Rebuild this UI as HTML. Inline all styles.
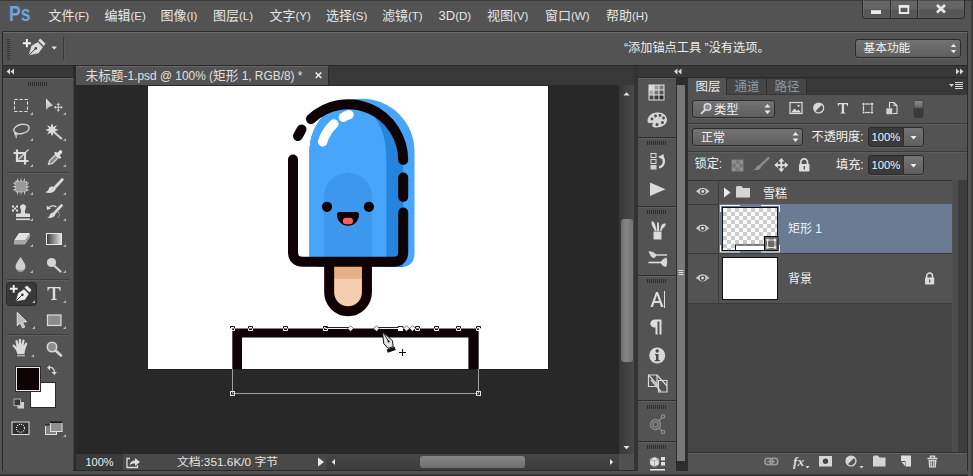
<!DOCTYPE html>
<html lang="zh-CN">
<head>
<meta charset="utf-8">
<title>Photoshop</title>
<style>
*{margin:0;padding:0;box-sizing:border-box}
html,body{width:973px;height:476px;overflow:hidden;background:#535353}
body{position:relative;font-family:"Liberation Sans","Noto Sans CJK SC",sans-serif;color:#e8e8e8;font-size:12px}
.a{position:absolute}
.t{position:absolute;white-space:nowrap;line-height:1}
svg{position:absolute;overflow:visible}
.m{font-size:13px;color:#e6e6e6}.m .l{font-size:11.5px;position:relative;top:-0.5px}
.dd{border:1px solid #2b2b2b;border-radius:3px;background:linear-gradient(#737373,#5e5e5e);box-shadow:0 1px 0 #626262}
.fld{border:1px solid #2b2b2b;border-radius:3px;background:#3a3a3a;box-shadow:0 1px 0 #626262;overflow:hidden}
.fld i{position:absolute;right:0;top:0;width:20px;height:18px;background:linear-gradient(#757575,#5f5f5f);border-left:1px solid #2f2f2f}
.tl{font-size:11.900px}
</style>
</head>
<body>
<!-- ===== FRAME ===== -->
<div class="a" style="left:0;top:0;width:973px;height:1px;background:#3a3a3a"></div>
<div class="a" style="left:0;top:31px;width:973px;height:445px;background:#3e3e3e"></div>
<div class="a" style="left:2px;top:31px;width:966px;height:1px;background:#2a2a2a"></div>
<!-- options bar -->
<div class="a" id="opt" style="left:2px;top:32px;width:966px;height:33px;background:#535353;border-top:1px solid #6a6a6a;border-left:1px solid #2a2a2a;border-right:1px solid #2a2a2a"></div>
<div class="a" style="left:2px;top:65px;width:966px;height:1px;background:#2a2a2a"></div>

<!-- ===== OPTIONS BAR CONTENT ===== -->
<svg id="opticons" style="left:0;top:0;z-index:3" width="973" height="66" viewBox="0 0 973 66">
<defs><linearGradient id="wb" x1="0" x2="0" y1="0" y2="1"><stop offset="0" stop-color="#686868"/><stop offset="0.5" stop-color="#626262"/><stop offset="0.52" stop-color="#565656"/><stop offset="1" stop-color="#585858"/></linearGradient></defs>
<g fill="#333">
<rect x="7" y="39" width="3" height="1"/><rect x="7" y="41" width="3" height="1"/><rect x="7" y="43" width="3" height="1"/><rect x="7" y="45" width="3" height="1"/><rect x="7" y="47" width="3" height="1"/><rect x="7" y="49" width="3" height="1"/><rect x="7" y="51" width="3" height="1"/><rect x="7" y="53" width="3" height="1"/><rect x="7" y="55" width="3" height="1"/><rect x="7" y="57" width="3" height="1"/><rect x="7" y="59" width="3" height="1"/>
</g>
<!-- pen+ -->
<path d="M22.800,43.200 H31 M26.900,39 V47.300" stroke="#f0f0f0" stroke-width="2"/>
<path d="M28.200,55.700 L31.300,45.500 L38,41.800 L43.200,47.300 L38.600,53.500 Z" fill="#dcdcdc" stroke="#404040" stroke-width="0.500"/>
<path d="M28.400,55.700 L35.300,48.800" stroke="#404040" stroke-width="1"/>
<circle cx="35.800" cy="48.400" r="1.300" fill="#404040"/>
<path d="M38.300,40.600 L40.300,38.500 L45.600,43.700 L43.700,46 Z" fill="#dcdcdc"/>
<path d="M51.500,46.500 h5.500 l-2.750,3.200 Z" fill="#e0e0e0"/>
<path d="M63.500,37 V60" stroke="#3a3a3a"/><path d="M64.500,37 V60" stroke="#5a5a5a"/>
<!-- workspace dropdown arrows -->
<path d="M950.800,47 l2.700,-3.300 l2.700,3.300 Z M950.800,50 l2.700,3.300 l2.700,-3.300 Z" fill="#e8e8e8"/>
<!-- window controls -->
<path d="M862.500,0 V15.500 Q862.500,18.500 865.500,18.500 H961.500 Q964.500,18.500 964.500,15.500 V0 Z" fill="url(#wb)" stroke="#2c2c2c"/>
<path d="M890.500,0 V18 M917.500,0 V18" stroke="#2c2c2c"/>
<path d="M891.500,0 V18 M918.500,0 V18 M863.500,0 V16" stroke="#6e6e6e" stroke-width="0.700"/>
<rect x="871" y="10.200" width="10" height="3.800" fill="#eaeaea"/>
<path d="M899.700,6.500 H908.300 V13 H899.700 Z" fill="none" stroke="#eaeaea" stroke-width="1.800"/>
<rect x="898.800" y="5" width="10.400" height="2.600" fill="#eaeaea"/>
<path d="M937,5 L945,12.500 M945,5 L937,12.500" stroke="#eaeaea" stroke-width="2.700"/>
</svg>
<div class="t" style="left:624px;top:42px;font-size:12.200px;color:#ececec">“添加锚点工具 ”没有选项。</div>
<div class="a dd" style="left:855px;top:39px;width:106px;height:19px"></div>
<div class="t" style="left:863.500px;top:42px;font-size:11.700px;color:#f2f2f2">基本功能</div>
<!-- ===== MENU ===== -->
<div class="t" style="left:9px;top:3px;font-size:22px;font-weight:bold;color:#6ca3dc;transform:scaleX(0.8);transform-origin:0 0">Ps</div>
<div id="menu">
<div class="t m" style="left:48.5px;top:9px"><span class="c">文件</span><span class="l">(F)</span></div>
<div class="t m" style="left:104.5px;top:9px"><span class="c">编辑</span><span class="l">(E)</span></div>
<div class="t m" style="left:160.5px;top:9px"><span class="c">图像</span><span class="l">(I)</span></div>
<div class="t m" style="left:213px;top:9px"><span class="c">图层</span><span class="l">(L)</span></div>
<div class="t m" style="left:269.5px;top:9px"><span class="c">文字</span><span class="l">(Y)</span></div>
<div class="t m" style="left:326px;top:9px"><span class="c">选择</span><span class="l">(S)</span></div>
<div class="t m" style="left:382px;top:9px"><span class="c">滤镜</span><span class="l">(T)</span></div>
<div class="t m" style="left:438.5px;top:9px"><span class="c">3D</span><span class="l">(D)</span></div>
<div class="t m" style="left:487px;top:9px"><span class="c">视图</span><span class="l">(V)</span></div>
<div class="t m" style="left:545px;top:9px"><span class="c">窗口</span><span class="l">(W)</span></div>
<div class="t m" style="left:606px;top:9px"><span class="c">帮助</span><span class="l">(H)</span></div>
</div>

<!-- ===== CANVAS AREA ===== -->
<div class="a" id="doc" style="left:76px;top:66px;width:558px;height:406px;background:#282828"></div>

<!-- ===== CANVAS ===== -->
<div class="a" style="left:148px;top:86px;width:400px;height:283px;background:#fff;box-shadow:1px 1px 0 #1c1c1c"></div>
<svg id="art" style="left:0;top:0" width="973" height="476" viewBox="0 0 973 476">
<defs>
<clipPath id="bodyclip"><path d="M309.5,151.3 A52.5,52.5 0 0 1 414.5,151.3 L414.5,253 Q414.5,267 400.5,267 L321.5,267 Q309.5,267 309.5,255 Z"/></clipPath>
<clipPath id="cv"><rect x="148" y="86" width="400" height="283"/></clipPath>
</defs>
<!-- body -->
<g clip-path="url(#bodyclip)">
<rect x="300" y="90" width="130" height="180" fill="#47a6fb"/>
<path d="M293,270 L293,160 A55,56 0 0 1 403.2,160 L403.2,270 Z" fill="#2585dc"/>
<path d="M386.300,270 L386.300,160 C386.300,140 382,125 372,114 L350,92 L280,92 L280,270 Z" fill="#47a6fb"/>
<path d="M324,270 L324,196.7 A24,24 0 0 1 372,196.7 L372,270 Z" fill="#3d97ec"/>
</g>
<!-- stick -->
<path d="M329.15,262 L329.15,292.3 A18.9,18.9 0 0 0 366.95,292.3 L366.95,262 Z" fill="#f5cdb0"/>
<rect x="329.5" y="262" width="37.5" height="16.7" fill="#eab085"/>
<path d="M329.15,262 L329.15,292.3 A18.9,18.9 0 0 0 366.95,292.3 L366.95,262" fill="none" stroke="#0e0205" stroke-width="10"/>
<!-- highlights -->
<path d="M322.600,141.700 A42,42 0 0 1 333.900,123.900" fill="none" stroke="#fff" stroke-width="9.500" stroke-linecap="round"/>
<path d="M343.300,117.300 A41,41 0 0 1 349,114.700" fill="none" stroke="#fff" stroke-width="9.400" stroke-linecap="round"/>
<!-- outline -->
<g fill="none" stroke="#0e0205" stroke-width="10" stroke-linecap="round">
<path d="M293,159.500 L293,251.700 Q293,261.700 303,261.700 L393.2,261.7 Q403.2,261.7 403.2,251.7 L403.2,212.5"/>
<path d="M403.2,197 L403.2,177.5"/>
<path d="M403.2,160 A55,56 0 0 0 311,119"/>
<path d="M301.5,129.5 L298,136"/>
</g>
<!-- face -->
<circle cx="327" cy="206.8" r="5.1" fill="#0e0205"/>
<circle cx="368.9" cy="206.8" r="5.1" fill="#0e0205"/>
<path d="M337,214.5 Q337,212 339.5,212 L356.5,212 Q359,212 359,214.5 A11,11.3 0 0 1 337,214.5 Z" fill="#0e0205"/>
<rect x="342.8" y="217.8" width="10.2" height="6.4" rx="3.2" fill="#f25f65"/>
<!-- rect shape -->
<g clip-path="url(#cv)">
<path d="M232.6,328.5 L478.6,328.5 L478.6,375 L468.4,375 L468.4,337.4 L242,337.4 L242,375 L232.6,375 Z" fill="#0e0205"/>
</g>
<!-- path outline / bbox -->
<path d="M232.5,369 L232.5,393.5 L478.5,393.5 L478.5,369" fill="none" stroke="#a0a0a0" stroke-width="1"/>
<path d="M232.5,328.5 L232.5,369 M478.5,328.5 L478.5,369" fill="none" stroke="#555" stroke-width="1"/>
<path d="M325.500,327.500 L350.500,327.500 M376.500,327.500 L400.500,327.500" stroke="#222" stroke-width="1"/>
<path d="M325.500,328.500 L350.500,328.500 M376.500,328.500 L400.500,328.500" stroke="#f0f0f0" stroke-width="1"/>
<g>
<path d="M230.5,328.5 V326.5 H234.5 V328.5" fill="none" stroke="#111" stroke-width="1"/><path d="M230.5,328.5 V330.5 H234.5 V328.5" fill="none" stroke="#fff" stroke-width="1"/>
<path d="M248.5,328.5 V326.5 H252.5 V328.5" fill="none" stroke="#111" stroke-width="1"/><path d="M248.5,328.5 V330.5 H252.5 V328.5" fill="none" stroke="#fff" stroke-width="1"/>
<path d="M283.5,328.5 V326.5 H287.5 V328.5" fill="none" stroke="#111" stroke-width="1"/><path d="M283.5,328.5 V330.5 H287.5 V328.5" fill="none" stroke="#fff" stroke-width="1"/>
<path d="M323.5,328.5 V326.5 H327.5 V328.5" fill="none" stroke="#111" stroke-width="1"/><path d="M323.5,328.5 V330.5 H327.5 V328.5" fill="none" stroke="#fff" stroke-width="1"/>
<path d="M415.5,328.5 V326.5 H419.5 V328.5" fill="none" stroke="#111" stroke-width="1"/><path d="M415.5,328.5 V330.5 H419.5 V328.5" fill="none" stroke="#fff" stroke-width="1"/>
<path d="M434.5,328.5 V326.5 H438.5 V328.5" fill="none" stroke="#111" stroke-width="1"/><path d="M434.5,328.5 V330.5 H438.5 V328.5" fill="none" stroke="#fff" stroke-width="1"/>
<path d="M456.5,328.5 V326.5 H460.5 V328.5" fill="none" stroke="#111" stroke-width="1"/><path d="M456.5,328.5 V330.5 H460.5 V328.5" fill="none" stroke="#fff" stroke-width="1"/>
<path d="M476.5,328.5 V326.5 H480.5 V328.5" fill="none" stroke="#111" stroke-width="1"/><path d="M476.5,328.5 V330.5 H480.5 V328.5" fill="none" stroke="#fff" stroke-width="1"/>
<rect x="230.500" y="391.500" width="4" height="4" fill="none" stroke="#e0e0e0" stroke-width="1"/><rect x="476.500" y="391.500" width="4" height="4" fill="none" stroke="#e0e0e0" stroke-width="1"/>
<path d="M350.5,325.7 l2.8,2.8 l-2.8,2.8 l-2.8,-2.8 Z" fill="#fff" stroke="#222" stroke-width="0.6"/>
<path d="M376.5,325.7 l2.8,2.8 l-2.8,2.8 l-2.8,-2.8 Z" fill="#fff" stroke="#222" stroke-width="0.6"/>
<path d="M406.5,325.7 l2.8,2.8 l-2.8,2.8 l-2.8,-2.8 Z" fill="#fff" stroke="#222" stroke-width="0.6"/>
<path d="M412.5,325.7 l2.8,2.8 l-2.8,2.8 l-2.8,-2.8 Z" fill="#fff" stroke="#222" stroke-width="0.6"/>
<rect x="398" y="326" width="5" height="5" fill="#fff"/><path d="M398,328 V326.500 H403 V328" fill="none" stroke="#222" stroke-width="1"/>
</g>
<!-- pen cursor -->
<path d="M382.3,331.3 L392.4,340.6 L393.2,346.6 L388,348.4 L383.8,343.6 Z" fill="#e4e4e4" stroke="#111" stroke-width="1"/>
<path d="M383,332.3 L388.3,340.8" stroke="#111" stroke-width="0.9" fill="none"/>
<circle cx="388.6" cy="341.4" r="1.1" fill="#111"/>
<path d="M386.700,349.400 L394.600,346.700 L395.700,350 L387.800,352.800 Z" fill="#111"/>
<path d="M399,352.500 L406,352.500 M402.500,349 L402.500,356" stroke="#111" stroke-width="1"/>
</svg>
<!-- ===== TOOLS PANEL ===== -->
<div class="a" style="left:0;top:31px;width:3px;height:445px;background:#535353"></div>
<div class="a" style="left:2px;top:31px;width:1px;height:440px;background:#2a2a2a"></div>
<div class="a" style="left:3px;top:66px;width:70px;height:11px;background:#383838"></div>
<div class="a" style="left:3px;top:77px;width:70px;height:1px;background:#2a2a2a"></div>
<div class="a" id="tools" style="left:3px;top:78px;width:70px;height:396px;background:#535353;border-top:1px solid #626262"></div>
<div class="a" style="left:73px;top:66px;width:3px;height:405px;background:#2a2a2a"></div><div class="a" style="left:73px;top:78px;width:1px;height:396px;background:#414141"></div>
<!-- tab bar -->
<div class="a" style="left:76px;top:66px;width:558px;height:19px;background:#383838"></div>
<div class="a" style="left:76px;top:66px;width:253px;height:19px;background:#535353;border-top:1px solid #656565;border-right:1px solid #2a2a2a"></div>
<div class="t" id="tabtxt" style="left:85.500px;top:70px;font-size:12.700px;color:#e0e0e0">未标题<span class="tl">-1.psd @ 100% (</span>矩形<span class="tl"> 1, RGB/8) *</span></div>
<svg style="left:314.500px;top:72px" width="7" height="7" viewBox="0 0 7 7"><path d="M0.700,0.500 L6.300,6 M6.300,0.500 L0.700,6" stroke="#e8e8e8" stroke-width="1.700"/></svg>
<!-- status bar -->
<div class="a" style="left:76px;top:454px;width:558px;height:17px;background:#484848"></div>
<div class="a" style="left:76px;top:454px;width:47px;height:17px;background:#3a3a3a"></div>
<div class="t" style="left:85.500px;top:457px;font-size:11px;color:#eee">100%</div>
<div class="t" style="left:177px;top:456.500px;font-size:11.800px;color:#e6e6e6">文档:351.6K/0 字节</div>
<div class="a" style="left:326px;top:454px;width:293px;height:17px;background:linear-gradient(#464646,#3c3c3c)"></div>
<div class="a" style="left:420px;top:456px;width:105px;height:12px;border-radius:3px;background:linear-gradient(#858585,#707070)"></div>
<!-- v scrollbar -->
<div class="a" style="left:619px;top:85px;width:16px;height:369px;background:linear-gradient(90deg,#363636,#404040 40%,#4a4a4a)"></div><div class="a" style="left:619px;top:454px;width:16px;height:17px;background:#505050"></div>
<div class="a" style="left:621px;top:219px;width:12px;height:143px;border-radius:3px;background:linear-gradient(90deg,#6c6c6c,#868686 40%,#747474)"></div>
<div class="a" style="left:0;top:471px;width:973px;height:3px;background:#515151"></div><div class="a" style="left:0;top:474px;width:973px;height:2px;background:linear-gradient(#3c3c3c,#2c2c2c)"></div>
<div class="a" style="left:73px;top:470px;width:895px;height:1px;background:#2a2a2a"></div>

<!-- ===== TOOL ICONS ===== -->
<svg id="ticons" style="left:0;top:0" width="76" height="476" viewBox="0 0 76 476">
<defs>
<linearGradient id="gg" x1="0" x2="1" y1="0" y2="0"><stop offset="0" stop-color="#3a3a3a"/><stop offset="1" stop-color="#e4e4e4"/></linearGradient>
<linearGradient id="ig" x1="0" x2="0" y1="0" y2="1"><stop offset="0" stop-color="#ececec"/><stop offset="1" stop-color="#b4b4b4"/></linearGradient>
</defs>
<path d="M6.500,71.500 l3.500,-3 l0,6 Z M10.500,71.500 l3.500,-3 l0,6 Z" fill="#d8d8d8"/>
<rect x="28" y="82" width="1" height="4" fill="#2e2e2e"/><rect x="30" y="82" width="1" height="4" fill="#2e2e2e"/><rect x="32" y="82" width="1" height="4" fill="#2e2e2e"/><rect x="34" y="82" width="1" height="4" fill="#2e2e2e"/><rect x="36" y="82" width="1" height="4" fill="#2e2e2e"/><rect x="38" y="82" width="1" height="4" fill="#2e2e2e"/><rect x="40" y="82" width="1" height="4" fill="#2e2e2e"/><rect x="42" y="82" width="1" height="4" fill="#2e2e2e"/><rect x="44" y="82" width="1" height="4" fill="#2e2e2e"/><rect x="46" y="82" width="1" height="4" fill="#2e2e2e"/>
<!-- dividers -->
<g stroke="#3d3d3d" stroke-width="1"><path d="M7,172.500 H69 M7,279.500 H69 M7,334.500 H69"/></g>
<g stroke="#5e5e5e" stroke-width="1"><path d="M7,173.500 H69 M7,280.500 H69 M7,335.500 H69"/></g>
<!-- selected cell -->
<rect x="6.500" y="282.500" width="30" height="23" rx="3" fill="#383838" stroke="#2c2c2c"/>
<!-- marquee -->
<rect x="14.500" y="99.500" width="13" height="12" fill="none" stroke="#dedede" stroke-width="1.1" stroke-dasharray="3.2,1.8"/>
<!-- move -->
<path d="M46,98.500 L46,110 L49,107 L53,105.500 Z" fill="url(#ig)"/>
<path d="M58.300,102.800 l1.700,2.100 h-1.200 v1.900 h1.900 v-1.200 l2.100,1.700 l-2.100,1.700 v-1.200 h-1.900 v1.900 h1.200 l-1.700,2.100 l-1.700,-2.100 h1.200 v-1.900 h-1.900 v1.200 l-2.100,-1.700 l2.100,-1.700 v1.200 h1.900 v-1.900 h-1.200 Z" fill="#d0d0d0"/>
<!-- lasso -->
<ellipse cx="21.500" cy="129" rx="7.800" ry="4.600" transform="rotate(-12 21.500 129)" fill="none" stroke="#d0d0d0" stroke-width="1.400"/>
<path d="M15.500,132 c-1.500,1.500 -1,3 0.800,3 c1.500,0 1.500,-2 0,-2 c-1,0 -0.500,3 0.200,5" fill="none" stroke="#d0d0d0" stroke-width="1.100"/>
<!-- wand -->
<path d="M52,123.200 l1.400,3.800 l3.500,-2 l-2,3.500 l3.800,1.400 l-3.800,1.400 l2,3.500 l-3.500,-2 l-1.400,3.800 l-1.400,-3.800 l-3.500,2 l2,-3.500 l-3.800,-1.400 l3.800,-1.400 l-2,-3.500 l3.500,2 Z" fill="#dcdcdc"/>
<path d="M54.500,132.500 L61.300,138.500" stroke="#d0d0d0" stroke-width="2.200" stroke-linecap="round"/>
<!-- crop -->
<path d="M17,149.500 V161 H28.500 M13.500,153 H25 V164.500" fill="none" stroke="#dcdcdc" stroke-width="2.200"/>
<rect x="18.500" y="154.500" width="5" height="5" fill="#6a6a6a"/>
<path d="M18.500,159.500 L28.500,149.500" stroke="#dcdcdc" stroke-width="1.100"/>
<!-- eyedropper -->
<path d="M48.500,164.500 L49.500,160.500 L55.500,154.500 L58.500,157.500 L52.500,163.500 Z" fill="#8e8e8e" stroke="#dadada" stroke-width="1.200"/>
<path d="M55.500,153 L60,157.500" stroke="#e0e0e0" stroke-width="2.400" stroke-linecap="round"/>
<path d="M57.500,155 L60.500,152" stroke="#e0e0e0" stroke-width="3.600" stroke-linecap="round"/>
<!-- healing -->
<rect x="15" y="181" width="12" height="11" rx="2.500" fill="#9a9a9a" stroke="#e0e0e0" stroke-width="1.200" stroke-dasharray="1.500,1.300"/>
<path d="M17.500,178.500 V194.500 M21,178.500 V194.500 M24.500,178.500 V194.500 M13,183 H29 M13,186.500 H29 M13,190 H29" stroke="#e0e0e0" stroke-width="0.700" stroke-dasharray="2.500,11,2.500" />
<!-- brush -->
<path d="M62.300,179.500 L54,188.500" stroke="#d8d8d8" stroke-width="2.800" stroke-linecap="round"/>
<path d="M53.500,187 c-2.500,-1.200 -4.500,0.500 -5,2.500 c-0.500,1.500 -1.800,2.300 -3.500,2.500 c3.500,2 9.500,1 10.800,-3 Z" fill="#d8d8d8"/>
<!-- stamp -->
<path d="M12,205.500 h2 v2 h-2 Z M16,205.500 h2 v2 h-2 Z M14,207.500 h2 v2 h-2 Z M12,209.500 h2 v2 h-2 Z M16,209.500 h2 v2 h-2 Z" fill="#e6e6e6"/>
<path d="M20.500,209 a3,3 0 1 1 5,0 c-0.800,1.500 -0.800,3 0,4.500 h3.500 q1,0 1,1 v2.500 h-14 v-2.500 q0,-1 1,-1 h3.500 c0.800,-1.500 0.800,-3 0,-4.500 Z" fill="#dcdcdc"/>
<rect x="16" y="218.500" width="14" height="1.600" fill="#dcdcdc"/>
<!-- history brush -->
<path d="M61.500,205.500 L53.500,214" stroke="#d8d8d8" stroke-width="2.600" stroke-linecap="round"/>
<path d="M54,213 c-2,-1 -3.800,0.300 -4.300,2.200 c-0.400,1.300 -1.300,1.800 -2.700,2 c2.800,1.500 7.500,0.600 8.500,-2.700 Z" fill="#d8d8d8"/>
<path d="M48,208.500 c2,-3 6,-3.500 8.500,-1.500" fill="none" stroke="#d8d8d8" stroke-width="1.300"/>
<path d="M46.500,205.500 l0.500,4.500 l4,-1.500 Z" fill="#d8d8d8"/>
<path d="M58.500,212 c1.500,2 1,4.500 -1,6" fill="none" stroke="#d8d8d8" stroke-width="1" stroke-dasharray="1.200,1.200"/>
<!-- eraser -->
<path d="M14,240.500 L19,233 L30,233 L25,240.500 Z" fill="#e2e2e2"/>
<path d="M14,240.500 L25,240.500 L30,233 L30,237 L25,244.500 L14,244.500 Z" fill="#a8a8a8"/>
<!-- gradient -->
<rect x="46.500" y="233.500" width="15" height="11" fill="url(#gg)" stroke="#e8e8e8" stroke-width="1"/>
<!-- blur -->
<path d="M20.500,257 c2,3.500 5,6.500 5,9.500 a5,5 0 0 1 -10,0 c0,-3 3,-6 5,-9.500 Z" fill="#cfcfcf"/>
<path d="M15.800,267.500 a4.700,2.500 0 0 0 9.400,0 a4.700,4.700 0 0 1 -9.400,0 Z" fill="#9c9c9c"/>
<!-- dodge -->
<circle cx="51.500" cy="262.500" r="4.600" fill="#d4d4d4"/>
<path d="M54.500,266 L60.500,271.500" stroke="#d4d4d4" stroke-width="2.200" stroke-linecap="round"/>
<!-- pen+ -->
<path d="M9.800,288.800 H17.600 M13.700,284.900 V292.700" stroke="#f0f0f0" stroke-width="1.900"/>
<path d="M15.500,301.500 L18,293 L24,289 L29,294 L25,300 Z" fill="#ececec" stroke="#303030" stroke-width="0.500"/>
<path d="M15.500,301.500 L22,295" stroke="#303030" stroke-width="1"/>
<circle cx="22.500" cy="294.700" r="1.200" fill="#303030"/>
<path d="M24.500,287.500 L27,285.500 L31.500,290 L29.500,292.500 Z" fill="#ececec"/>
<!-- T -->
<path d="M47.500,287 H60.500 V291 H59.700 C59.500,289 59,288.300 57.500,288.300 H55.200 V297.800 C55.200,298.900 55.700,299.200 57,299.300 V300 H51 V299.300 C52.300,299.200 52.800,298.900 52.800,297.800 V288.300 H50.500 C49,288.300 48.500,289 48.300,291 H47.500 Z" fill="#dedede"/>
<!-- path select arrow -->
<path d="M17.200,312.300 L17.200,325.800 L20.300,323 L22.500,328 L24.800,327 L22.600,322.200 L26.800,321.800 Z" fill="#bdbdbd" stroke="#ececec" stroke-width="0.800"/>
<!-- rectangle shape -->
<rect x="47.500" y="315" width="13.500" height="10.500" fill="#8c8c8c" stroke="#dcdcdc" stroke-width="1.200"/>
<!-- hand -->
<path d="M16,350 c-1,-1.500 -2.800,-3 -3.300,-4 c-0.500,-1.200 0.800,-2 1.800,-1 l2,2 l-1,-5.500 c-0.300,-1.500 1.700,-2 2.100,-0.500 l1,4 l0.200,-5.200 c0,-1.500 2.200,-1.500 2.200,0 l0.200,5 l1.200,-4.300 c0.400,-1.500 2.400,-1 2.100,0.500 l-0.900,4.800 l1.600,-2.600 c0.800,-1.300 2.500,-0.400 1.900,1 c-1,2.300 -1.700,4.500 -2.200,6.800 l-0.500,3 h-7 Z" fill="#dadada"/>
<rect x="17" y="354.800" width="8" height="1.600" fill="#b0b0b0"/>
<!-- zoom -->
<circle cx="52" cy="347" r="4.700" fill="#8e8e8e" stroke="#d6d6d6" stroke-width="1.600"/>
<path d="M55.800,350.800 L61,355.500" stroke="#d6d6d6" stroke-width="2.600" stroke-linecap="round"/>
<!-- colour swatches -->
<rect x="30.500" y="382.500" width="25" height="25" fill="#fff" stroke="#2a2a2a"/>
<rect x="15.500" y="366.500" width="25" height="25" fill="#0e0205" stroke="#2a2a2a"/>
<rect x="16.500" y="367.500" width="23" height="23" fill="none" stroke="#e8e8e8"/>
<path d="M49,367.500 c3.500,-0.500 5.500,1.500 5.300,5" fill="none" stroke="#d8d8d8" stroke-width="1.300"/>
<path d="M47,367.800 l3,-2.800 v5.200 Z M54.300,375 l-2.700,-3 h5.300 Z" fill="#d8d8d8"/>
<rect x="17.500" y="402" width="6.500" height="6.500" fill="#d0d0d0"/>
<rect x="14" y="399" width="6.500" height="6.500" fill="#3a3a3a" stroke="#c8c8c8" stroke-width="0.800"/>
<!-- quick mask -->
<rect x="12" y="422" width="17" height="12.500" fill="#2f2f2f" stroke="#e0e0e0" stroke-width="1"/>
<circle cx="20.500" cy="428.300" r="4" fill="none" stroke="#f0f0f0" stroke-width="1.100" stroke-dasharray="1,1.100"/>
<!-- screen mode -->
<rect x="45.500" y="425.500" width="11" height="9" fill="#808080" stroke="#e0e0e0"/>
<rect x="50.500" y="422.500" width="11.500" height="9" fill="#8e8e8e" stroke="#e0e0e0"/>
<rect x="50" y="421.500" width="12.500" height="1.500" fill="#151515"/>
<rect x="45" y="424.500" width="5" height="1.200" fill="#151515"/>
<path d="M33,115 l0,-3 l-3,3 Z" fill="#b4b4b4"/><path d="M66,115 l0,-3 l-3,3 Z" fill="#b4b4b4"/><path d="M33,141 l0,-3 l-3,3 Z" fill="#b4b4b4"/><path d="M66,141 l0,-3 l-3,3 Z" fill="#b4b4b4"/><path d="M33,167 l0,-3 l-3,3 Z" fill="#b4b4b4"/><path d="M66,167 l0,-3 l-3,3 Z" fill="#b4b4b4"/><path d="M33,195 l0,-3 l-3,3 Z" fill="#b4b4b4"/><path d="M66,195 l0,-3 l-3,3 Z" fill="#b4b4b4"/><path d="M33,221 l0,-3 l-3,3 Z" fill="#b4b4b4"/><path d="M66,221 l0,-3 l-3,3 Z" fill="#b4b4b4"/><path d="M33,247 l0,-3 l-3,3 Z" fill="#b4b4b4"/><path d="M66,247 l0,-3 l-3,3 Z" fill="#b4b4b4"/><path d="M33,273 l0,-3 l-3,3 Z" fill="#b4b4b4"/><path d="M66,273 l0,-3 l-3,3 Z" fill="#b4b4b4"/><path d="M35,303 l0,-3 l-3,3 Z" fill="#b4b4b4"/><path d="M66,303 l0,-3 l-3,3 Z" fill="#b4b4b4"/><path d="M35,329 l0,-3 l-3,3 Z" fill="#b4b4b4"/><path d="M66,329 l0,-3 l-3,3 Z" fill="#b4b4b4"/><path d="M34,357 l0,-3 l-3,3 Z" fill="#b4b4b4"/><path d="M66,437 l0,-3 l-3,3 Z" fill="#b4b4b4"/>
</svg>
<!-- ===== RIGHT SIDE ===== -->
<div class="a" style="left:634px;top:66px;width:4px;height:405px;background:#333"></div>
<div class="a" style="left:638px;top:66px;width:329px;height:11px;background:#383838"></div>
<div class="a" style="left:638px;top:77px;width:329px;height:1px;background:#2a2a2a"></div>
<div class="a" id="dock" style="left:638px;top:78px;width:38px;height:393px;background:#535353"></div>
<div class="a" style="left:676px;top:78px;width:12px;height:393px;background:#2d2d2d"></div>
<div class="a" style="left:677px;top:85px;width:8px;height:376px;background:#787878"></div>
<!-- layers panel -->
<div class="a" id="lp" style="left:688px;top:78px;width:279px;height:393px;background:#535353"></div>
<div class="a" style="left:688px;top:78px;width:279px;height:17px;background:#383838"></div>
<div class="a" style="left:727px;top:79px;width:40px;height:15px;background:#464646;border-right:1px solid #2c2c2c"></div>
<div class="a" style="left:767px;top:79px;width:40px;height:15px;background:#464646;border-right:1px solid #2c2c2c"></div>
<div class="a" style="left:688px;top:78px;width:39px;height:17px;background:#535353;border-right:1px solid #2c2c2c"></div>
<div class="t" style="left:695.500px;top:80.500px;font-size:12.500px;color:#eee">图层</div>
<div class="t" style="left:734.500px;top:80.500px;font-size:12.500px;color:#8c97a6">通道</div>
<div class="t" style="left:774.500px;top:80.500px;font-size:12.500px;color:#8c97a6">路径</div>
<div class="a" style="left:688px;top:123px;width:279px;height:1px;background:#3a3a3a"></div>
<div class="a" style="left:688px;top:124px;width:279px;height:1px;background:#5e5e5e"></div>
<div class="a" style="left:688px;top:151px;width:279px;height:1px;background:#3a3a3a"></div>
<div class="a" style="left:688px;top:152px;width:279px;height:1px;background:#5e5e5e"></div>
<!-- dropdowns -->
<div class="a dd" style="left:692px;top:100px;width:83px;height:18px"></div>
<div class="a dd" style="left:692px;top:128px;width:111px;height:18px"></div>
<div class="t" style="left:714px;top:103.500px;font-size:12.200px;color:#f0f0f0">类型</div>
<div class="t" style="left:701px;top:131.500px;font-size:12px;color:#f0f0f0">正常</div>
<div class="t" style="left:811.500px;top:131px;font-size:12.200px;color:#f0f0f0">不透明度:</div>
<div class="t" style="left:836px;top:159px;font-size:12.200px;color:#f0f0f0">填充:</div>
<div class="t" style="left:694.500px;top:158px;font-size:12.200px;color:#f0f0f0">锁定:</div>
<div class="a fld" style="left:868px;top:127px;width:56px;height:20px"><i></i></div>
<div class="a fld" style="left:868px;top:155px;width:56px;height:20px"><i></i></div>
<div class="t" style="left:871.500px;top:131.500px;font-size:11.300px;color:#f4f4f4">100%</div>
<div class="t" style="left:871.500px;top:159.500px;font-size:11.300px;color:#f4f4f4">100%</div>
<!-- list -->
<div class="a" style="left:688px;top:180px;width:279px;height:291px;background:#454545"></div>
<div class="a" style="left:688px;top:180px;width:264px;height:1px;background:#333"></div>
<div class="a" style="left:688px;top:181px;width:264px;height:23px;background:#535353"></div>
<div class="a" style="left:688px;top:204px;width:264px;height:49px;background:#535353;border-top:1px solid #3a3a3a"></div>
<div class="a" style="left:719px;top:204px;width:233px;height:49px;background:#6b7b93"></div>
<div class="a" style="left:688px;top:253px;width:264px;height:51px;background:#535353;border-top:1px solid #3a3a3a;border-bottom:1px solid #3a3a3a"></div>
<div class="a" style="left:718px;top:181px;width:1px;height:122px;background:#3d3d3d"></div>
<div class="a" style="left:952px;top:180px;width:6px;height:272px;background:#4d4d4d"></div>
<div class="a" style="left:958px;top:180px;width:9px;height:272px;background:#3d3d3d"></div>
<div class="t" style="left:763px;top:187.500px;font-size:12px;color:#f0f0f0">雪糕</div>
<div class="t" style="left:788px;top:222.500px;font-size:12px;color:#f4f4f4">矩形 1</div>
<div class="t" style="left:788px;top:272.500px;font-size:12px;color:#f0f0f0">背景</div>
<!-- thumbs -->
<div class="a" id="th1" style="left:722px;top:207px;width:56px;height:44px;border:1px solid #111;background-color:#fff;background-image:linear-gradient(45deg,#ccc 25%,transparent 25%,transparent 75%,#ccc 75%),linear-gradient(45deg,#ccc 25%,transparent 25%,transparent 75%,#ccc 75%);background-size:8px 8px;background-position:0 0,4px 4px"></div>
<div class="a" style="left:722px;top:257px;width:56px;height:43px;border:1px solid #111;background:#fff"></div>
<!-- footer -->
<div class="a" style="left:688px;top:452px;width:279px;height:19px;background:#535353;border-top:1px solid #2f2f2f"></div>
<div class="a" style="left:688px;top:453px;width:279px;height:1px;background:#646464"></div>
<div class="a" style="left:967px;top:66px;width:1px;height:405px;background:#2a2a2a"></div>
<div class="a" style="left:968px;top:31px;width:5px;height:445px;background:#535353"></div><div class="a" style="left:971px;top:0;width:2px;height:476px;background:#3c3c3c"></div>
<div class="a" style="left:686px;top:78px;width:2px;height:393px;background:#2d2d2d"></div>

<!-- ===== RIGHT ICONS ===== -->
<svg id="ricons" style="left:0;top:0;z-index:4" width="973" height="476" viewBox="0 0 973 476">
<defs>
<linearGradient id="tg" x1="0" x2="0" y1="0" y2="1"><stop offset="0" stop-color="#8e8e8e"/><stop offset="0.4" stop-color="#6a6a6a"/><stop offset="0.45" stop-color="#3c3c3c"/><stop offset="1" stop-color="#383838"/></linearGradient>
</defs>
<path d="M674,71.500 l3.500,-3 l0,6 Z M678,71.500 l3.500,-3 l0,6 Z" fill="#d8d8d8"/>
<path d="M959.500,71.500 l-3.500,-3 l0,6 Z M963.500,71.500 l-3.500,-3 l0,6 Z" fill="#d8d8d8"/>
<path d="M949,84 h5 l-2.500,3 Z" fill="#d0d0d0"/>
<path d="M955,82.500 h8 M955,84.500 h8 M955,86.500 h8 M955,88.500 h8" stroke="#d8d8d8" stroke-width="1"/>
<!-- dock dividers -->
<g stroke="#2e2e2e"><path d="M638,137.500 H676 M638,206.500 H676 M638,275.500 H676 M638,400.500 H676 M638,441.500 H676"/></g>
<g stroke="#616161"><path d="M638,138.500 H676 M638,207.500 H676 M638,276.500 H676 M638,401.500 H676 M638,442.500 H676 M638,78.500 H676"/></g>
<rect x="647" y="141" width="1" height="4" fill="#2e2e2e"/><rect x="649" y="141" width="1" height="4" fill="#2e2e2e"/><rect x="651" y="141" width="1" height="4" fill="#2e2e2e"/><rect x="653" y="141" width="1" height="4" fill="#2e2e2e"/><rect x="655" y="141" width="1" height="4" fill="#2e2e2e"/><rect x="657" y="141" width="1" height="4" fill="#2e2e2e"/><rect x="659" y="141" width="1" height="4" fill="#2e2e2e"/><rect x="661" y="141" width="1" height="4" fill="#2e2e2e"/><rect x="663" y="141" width="1" height="4" fill="#2e2e2e"/><rect x="665" y="141" width="1" height="4" fill="#2e2e2e"/><rect x="647" y="210" width="1" height="4" fill="#2e2e2e"/><rect x="649" y="210" width="1" height="4" fill="#2e2e2e"/><rect x="651" y="210" width="1" height="4" fill="#2e2e2e"/><rect x="653" y="210" width="1" height="4" fill="#2e2e2e"/><rect x="655" y="210" width="1" height="4" fill="#2e2e2e"/><rect x="657" y="210" width="1" height="4" fill="#2e2e2e"/><rect x="659" y="210" width="1" height="4" fill="#2e2e2e"/><rect x="661" y="210" width="1" height="4" fill="#2e2e2e"/><rect x="663" y="210" width="1" height="4" fill="#2e2e2e"/><rect x="665" y="210" width="1" height="4" fill="#2e2e2e"/><rect x="647" y="279" width="1" height="4" fill="#2e2e2e"/><rect x="649" y="279" width="1" height="4" fill="#2e2e2e"/><rect x="651" y="279" width="1" height="4" fill="#2e2e2e"/><rect x="653" y="279" width="1" height="4" fill="#2e2e2e"/><rect x="655" y="279" width="1" height="4" fill="#2e2e2e"/><rect x="657" y="279" width="1" height="4" fill="#2e2e2e"/><rect x="659" y="279" width="1" height="4" fill="#2e2e2e"/><rect x="661" y="279" width="1" height="4" fill="#2e2e2e"/><rect x="663" y="279" width="1" height="4" fill="#2e2e2e"/><rect x="665" y="279" width="1" height="4" fill="#2e2e2e"/><rect x="647" y="405" width="1" height="4" fill="#2e2e2e"/><rect x="649" y="405" width="1" height="4" fill="#2e2e2e"/><rect x="651" y="405" width="1" height="4" fill="#2e2e2e"/><rect x="653" y="405" width="1" height="4" fill="#2e2e2e"/><rect x="655" y="405" width="1" height="4" fill="#2e2e2e"/><rect x="657" y="405" width="1" height="4" fill="#2e2e2e"/><rect x="659" y="405" width="1" height="4" fill="#2e2e2e"/><rect x="661" y="405" width="1" height="4" fill="#2e2e2e"/><rect x="663" y="405" width="1" height="4" fill="#2e2e2e"/><rect x="665" y="405" width="1" height="4" fill="#2e2e2e"/><rect x="647" y="445" width="1" height="4" fill="#2e2e2e"/><rect x="649" y="445" width="1" height="4" fill="#2e2e2e"/><rect x="651" y="445" width="1" height="4" fill="#2e2e2e"/><rect x="653" y="445" width="1" height="4" fill="#2e2e2e"/><rect x="655" y="445" width="1" height="4" fill="#2e2e2e"/><rect x="657" y="445" width="1" height="4" fill="#2e2e2e"/><rect x="659" y="445" width="1" height="4" fill="#2e2e2e"/><rect x="661" y="445" width="1" height="4" fill="#2e2e2e"/><rect x="663" y="445" width="1" height="4" fill="#2e2e2e"/><rect x="665" y="445" width="1" height="4" fill="#2e2e2e"/>
<!-- swatches -->
<rect x="648.500" y="84.500" width="16" height="16" fill="#e0e0e0"/>
<g>
<rect x="649.500" y="85.500" width="4" height="4" fill="#d8d8d8"/><rect x="654.500" y="85.500" width="4" height="4" fill="#9c9c9c"/><rect x="659.500" y="85.500" width="4" height="4" fill="#7a7a7a"/>
<rect x="649.500" y="90.500" width="4" height="4" fill="#a8a8a8"/><rect x="654.500" y="90.500" width="4" height="4" fill="#787878"/><rect x="659.500" y="90.500" width="4" height="4" fill="#555"/>
<rect x="649.500" y="95.500" width="4" height="4" fill="#4a4a4a"/><rect x="654.500" y="95.500" width="4" height="4" fill="#383838"/><rect x="659.500" y="95.500" width="4" height="4" fill="#262626"/>
</g>
<!-- palette -->
<path d="M647.500,121 C647.500,115 653,112.500 658,112.500 C663.500,112.500 667,116 667,120 C667,124.500 662,127.500 656,127.500 C653,127.500 651.500,126 652.500,124.500 C653.300,123.300 652,122.500 650.500,123 C648.800,123.500 647.500,122.800 647.500,121 Z" fill="#d6d6d6"/>
<g fill="#4a4a4a"><circle cx="652" cy="119" r="1.400"/><circle cx="655.500" cy="116" r="1.400"/><circle cx="660" cy="115.500" r="1.400"/><circle cx="663.500" cy="118" r="1.400"/><circle cx="662.500" cy="122.500" r="1.500"/><circle cx="657" cy="124.500" r="1.500"/></g>
<!-- history -->
<rect x="651" y="153.500" width="5" height="4" fill="#535353" stroke="#dcdcdc"/>
<rect x="651" y="159.500" width="5" height="4" fill="#535353" stroke="#dcdcdc"/>
<rect x="650.500" y="165" width="6" height="4.500" fill="#cfcfcf"/>
<path d="M659,167.500 C664.500,166 665.500,159.500 661.500,156" fill="none" stroke="#dcdcdc" stroke-width="2.200"/>
<path d="M658,157 l5.500,-3 l0.500,6 Z" fill="#dcdcdc"/>
<!-- play -->
<path d="M650,182.500 L665.500,189.200 L650,196 Z" fill="#dadada"/>
<!-- brush cup -->
<path d="M653.500,231.500 h8 v8 h-8 Z" fill="#dcdcdc"/>
<path d="M655,231 l-2.500,-4.500 c-1.500,-2.500 -1,-5 -0.300,-5.500 c1.500,0.800 3,3 3.500,5.500 l0.800,4.500 Z M656.800,231 l0.200,-6 c0,-2 0.500,-3 1,-3 c0.500,0 1,1 1,3 l0.200,6 Z M660,231 l1,-4.500 c0.600,-2.500 3,-3.500 4.800,-2.500 c-0.300,2.500 -2,3.500 -3.300,4.500 l-1,2.500 Z" fill="#dcdcdc"/>
<!-- brush presets -->
<path d="M648.500,251.500 c1.500,-0.500 4.500,0.500 6,1.500 c2,1.300 2,3.500 0.500,4.500 c-1.500,1 -3.500,0 -4.500,-2 c-0.700,-1.500 -1.300,-2.800 -2,-4 Z" fill="#d8d8d8"/>
<path d="M655,255 H667" stroke="#e0e0e0" stroke-width="1.400"/>
<path d="M648.500,262.500 H661" stroke="#e0e0e0" stroke-width="1.600"/>
<path d="M660.500,262.500 c1,-2.500 3.500,-4.500 6,-5 c1,2.500 1,7 -0.500,9.500 c-2.500,-0.500 -4.500,-2 -5.500,-4.500 Z" fill="#d8d8d8"/>
<!-- A| -->
<path d="M650.500,307 L656,292 H658 L663.500,307 H661 L659.700,303 H654.200 L652.900,307 Z M654.900,301 H659 L657,295 Z" fill="#dedede"/>
<path d="M664.500,291 V308" stroke="#dedede" stroke-width="1"/>
<!-- pilcrow -->
<path d="M661.500,319.500 V334.500 H659.500 V321.500 H657.500 V334.500 H655.500 V327.500 C651,327.500 650,324.800 650.500,322.500 C651,320.500 653,319.500 655.500,319.500 Z" fill="#dedede"/>
<!-- info -->
<circle cx="657.200" cy="355.500" r="8" fill="#d8d8d8"/>
<circle cx="657.200" cy="351" r="1.700" fill="#484848"/>
<path d="M655,354 H658.500 V360 H659.800 V361.300 H654.800 V360 H656 V355.300 H655 Z" fill="#484848"/>
<!-- clone source -->
<g fill="none" stroke="#d8d8d8" stroke-width="1.200">
<path d="M648.500,375 H657 V386.500 H648.500 Z"/>
<path d="M658.500,380.500 H667 V392 H658.500 Z"/>
<path d="M648.500,375 L658.500,386 M657,375 L667,386 M651,380 L661,391.500"/>
</g>
<!-- cc libs -->
<g fill="none" stroke="#8c8c8c" stroke-width="1.300">
<circle cx="655.500" cy="424.500" r="5"/><circle cx="655.500" cy="424.500" r="2.600"/>
<path d="M659,421 L662,417.500 M659,428 L662,431"/>
<circle cx="663" cy="416.500" r="1.700"/><circle cx="663" cy="432" r="1.700"/>
</g>
<!-- 3d -->
<path d="M654.500,457 l4.500,2 v5.500 l-4.500,2.500 l-4.500,-2.500 v-5.500 Z" fill="#e4e4e4" stroke="#8a8a8a" stroke-width="0.700"/>
<path d="M650,459 l4.500,2.200 l4.500,-2.200 M654.500,461.200 V467" fill="none" stroke="#8a8a8a" stroke-width="0.700"/>
<rect x="661" y="457" width="4" height="3.500" fill="#e0e0e0"/><rect x="661" y="462" width="4" height="3.500" fill="#e0e0e0"/>
<rect x="650" y="469" width="15" height="1.500" fill="#e8e8e8"/>
<!-- strip grip -->
<path d="M678.500,270.500 h5 M678.500,272.500 h5 M678.500,274.500 h5" stroke="#dcdcdc"/>
<!-- v scroll arrows / h scroll arrows -->
<path d="M623.500,95.500 h6 l-3,-3.200 Z" fill="#e6e6e6"/>
<path d="M623.500,446 h6 l-3,3.200 Z" fill="#e6e6e6"/>
<path d="M335,459 v6 l-3.200,-3 Z M610,459 v6 l3.200,-3 Z" fill="#e6e6e6"/>
<path d="M318,457.500 v9 l6,-4.500 Z" fill="#e8e8e8"/>
<!-- status share icon -->
<g transform="translate(5.500,0)"><path d="M124.500,458.500 H121.500 V467.500 H132 V465" fill="none" stroke="#dcdcdc" stroke-width="1.300"/>
<path d="M124,465.500 c0.500,-3.500 2.500,-5 5.500,-5 v-2.500 l5,4 l-5,4 v-2.500 c-2.500,0 -4,0.500 -5.500,2 Z" fill="#dcdcdc"/></g>
<!-- filter row icons -->
<path d="M705.300,109.500 L701.500,113.300" stroke="#dcdcdc" stroke-width="1.800" stroke-linecap="round"/>
<circle cx="707.500" cy="107" r="3.300" fill="#8a8a8a" stroke="#dcdcdc" stroke-width="1.500"/>
<path d="M764.500,107.500 l3,-3.500 l3,3.500 Z M764.500,110.500 l3,3.500 l3,-3.500 Z" fill="#ececec"/>
<path d="M792.500,135.500 l3,-3.500 l3,3.500 Z M792.500,138.500 l3,3.500 l3,-3.500 Z" fill="#ececec"/>
<rect x="790" y="102.500" width="12" height="11" fill="#555" stroke="#dcdcdc" stroke-width="1.200"/>
<path d="M791,112.500 l3.500,-4 l2.500,2.500 l1.500,-1.500 l2.500,3 Z" fill="#dcdcdc"/><circle cx="798.500" cy="105.800" r="1.100" fill="#dcdcdc"/>
<circle cx="818.700" cy="108" r="5" fill="#d8d8d8"/>
<path d="M815.200,111.500 A5,5 0 0 0 822.200,104.500 Z" fill="#555"/>
<circle cx="818.700" cy="108" r="5" fill="none" stroke="#d8d8d8" stroke-width="1.200"/>
<path d="M837.800,103 H848 V106.200 H847.300 C847.100,104.700 846.700,104.200 845.500,104.200 H844 V111.700 C844,112.500 844.400,112.800 845.400,112.900 V113.600 H840.400 V112.900 C841.400,112.800 841.800,112.500 841.800,111.700 V104.200 H840.300 C839.100,104.200 838.700,104.700 838.500,106.200 H837.800 Z" fill="#dedede"/>
<rect x="863.500" y="104" width="8.500" height="8.500" fill="none" stroke="#dcdcdc" stroke-width="1.200"/>
<g fill="#dcdcdc" stroke="#4a4a4a" stroke-width="0.500"><rect x="862.200" y="102.700" width="2.600" height="2.600"/><rect x="870.700" y="102.700" width="2.600" height="2.600"/><rect x="862.200" y="111.200" width="2.600" height="2.600"/><rect x="870.700" y="111.200" width="2.600" height="2.600"/></g>
<path d="M889.500,102.500 H894 L897,105.500 V113.500 H889.500 Z" fill="#555" stroke="#dcdcdc" stroke-width="1.100"/>
<path d="M894,102.500 V105.500 H897" fill="none" stroke="#dcdcdc" stroke-width="0.900"/>
<rect x="886" y="108" width="6.500" height="6.500" fill="#d0d0d0" stroke="#555" stroke-width="0.600"/>
<rect x="914" y="100.500" width="9" height="17" rx="1" fill="url(#tg)" stroke="#3a3a3a" stroke-width="0.800"/>
<!-- field arrows -->
<path d="M910.500,136 h6 l-3,3.400 Z M910.500,164 h6 l-3,3.400 Z" fill="#f0f0f0"/>
<!-- lock row -->
<rect x="732" y="160" width="11" height="11" fill="#777" stroke="#8a8a8a" stroke-width="0.800"/>
<path d="M732,160 h3.700 v3.700 h-3.700 Z M739.400,160 h3.600 v3.700 h-3.600 Z M735.700,163.700 h3.700 v3.700 h-3.700 Z M732,167.400 h3.700 v3.600 h-3.700 Z M739.400,167.400 h3.600 v3.600 h-3.600 Z" fill="#8e8e8e"/>
<path d="M768.500,158 L759.500,166.500" stroke="#8c8c8c" stroke-width="2.400" stroke-linecap="round"/>
<path d="M760,165.500 c-1.800,-0.800 -3.500,0.300 -4,2 c-0.400,1.200 -1.200,1.700 -2.500,1.900 c2.600,1.400 7,0.500 8,-2.500 Z" fill="#8c8c8c"/>
<path d="M781.300,158 l3,3.600 h-2.100 v2.600 h2.600 v-2.100 l3.600,3 l-3.600,3 v-2.100 h-2.600 v2.600 h2.100 l-3,3.600 l-3,-3.600 h2.100 v-2.600 h-2.600 v2.100 l-3.600,-3 l3.600,-3 v2.100 h2.600 v-2.600 h-2.100 Z" fill="#e0e0e0"/>
<path d="M800.700,164.500 v-2.300 a3.400,3.400 0 0 1 6.800,0 v2.300" fill="none" stroke="#dcdcdc" stroke-width="1.700"/>
<rect x="799" y="164" width="10.500" height="7.500" rx="0.800" fill="#dcdcdc"/>
<rect x="803.600" y="166" width="1.400" height="3.500" fill="#555"/>
<!-- list icons -->
<path d="M696.5999999999999,191.7 Q702.8,184.7 709.0,191.7 Q702.8,198.1 696.5999999999999,191.7 Z" fill="#c4c4c4"/><circle cx="702.8" cy="191.5" r="2.8" fill="#505050"/><circle cx="702.8" cy="191.5" r="1.4" fill="#dcdcdc"/><path d="M696.5999999999999,191.7 Q702.8,184.7 709.0,191.7" fill="none" stroke="#dedede" stroke-width="1.1"/><path d="M696.4,228.5 Q702.6,221.5 708.8000000000001,228.5 Q702.6,234.9 696.4,228.5 Z" fill="#c4c4c4"/><circle cx="702.6" cy="228.3" r="2.8" fill="#505050"/><circle cx="702.6" cy="228.3" r="1.4" fill="#dcdcdc"/><path d="M696.4,228.5 Q702.6,221.5 708.8000000000001,228.5" fill="none" stroke="#dedede" stroke-width="1.1"/><path d="M696.4,278.3 Q702.6,271.3 708.8000000000001,278.3 Q702.6,284.7 696.4,278.3 Z" fill="#c4c4c4"/><circle cx="702.6" cy="278.1" r="2.8" fill="#505050"/><circle cx="702.6" cy="278.1" r="1.4" fill="#dcdcdc"/><path d="M696.4,278.3 Q702.6,271.3 708.8000000000001,278.3" fill="none" stroke="#dedede" stroke-width="1.1"/>
<path d="M724,187.500 L730.500,192.500 L724,197.500 Z" fill="#ececec"/>
<path d="M736,187.500 q0,-1.500 1.500,-1.500 h4 l1.500,2 h7 v9.500 h-14 Z" fill="#d4d4d4"/>
<!-- selected thumb brackets & mask badge -->
<path d="M720.500,212 V205.500 H740 M761,205.500 H779.500 V212 M779.500,245 V252 H761 M740,252 H720.500 V245" fill="none" stroke="#f4f4f4" stroke-width="1"/>
<rect x="735.500" y="245" width="29" height="5.500" fill="#fff" stroke="#111" stroke-width="1"/>
<rect x="764.500" y="236.500" width="13.500" height="14" fill="#6a6a6a" stroke="#111" stroke-width="1"/>
<rect x="767.500" y="240" width="7.500" height="7.500" fill="none" stroke="#e6e6e6" stroke-width="1"/>
<g fill="#e6e6e6"><rect x="766.300" y="238.800" width="2.400" height="2.400"/><rect x="773.800" y="238.800" width="2.400" height="2.400"/><rect x="766.300" y="246.300" width="2.400" height="2.400"/><rect x="773.800" y="246.300" width="2.400" height="2.400"/></g>
<!-- bg lock -->
<path d="M926.700,278 v-2 a2.900,2.900 0 0 1 5.800,0 v2" fill="none" stroke="#dcdcdc" stroke-width="1.500"/>
<rect x="925" y="277.500" width="9.200" height="7" rx="0.700" fill="#dcdcdc"/>
<rect x="929" y="279.500" width="1.300" height="3" fill="#555"/>
<!-- footer icons -->
<g fill="none" stroke="#9a9a9a" stroke-width="1.600"><rect x="764.800" y="458.300" width="8" height="6.500" rx="3.200"/><rect x="769.800" y="458.300" width="8" height="6.500" rx="3.200"/></g>
<path d="M767.500,461.500 h7.500" stroke="#9a9a9a" stroke-width="1.400"/>
<path d="M805.500,466 h4 l-2,2.400 Z M859.500,466 h4 l-2,2.400 Z" fill="#d8d8d8"/>
<rect x="819" y="456" width="13" height="10.500" fill="#d6d6d6"/><circle cx="825.500" cy="461.300" r="2.700" fill="#444"/>
<circle cx="851" cy="461" r="5" fill="#d8d8d8"/><path d="M847.500,464.500 A5,5 0 0 0 854.500,457.500 Z" fill="#555"/><circle cx="851" cy="461" r="5" fill="none" stroke="#d8d8d8" stroke-width="1.200"/>
<path d="M873,457 q0,-1.500 1.500,-1.500 h3.500 l1.500,2 h6 v9 h-12.500 Z" fill="#d4d4d4"/>
<path d="M901,455.500 H911 V466.500 H905.500 V461 H901 Z" fill="#dcdcdc"/><path d="M901.500,462 l3.500,4 v-4 Z" fill="#dcdcdc"/>
<path d="M927.500,458.500 h10 M930.500,458 v-1.800 h4 v1.800" fill="none" stroke="#dcdcdc" stroke-width="1.300"/>
<path d="M928.500,460 h8 l-0.700,7.500 h-6.600 Z" fill="#dcdcdc"/>
<path d="M930.800,461 v5.500 M932.500,461 v5.500 M934.200,461 v5.500" stroke="#555" stroke-width="0.800"/>
</svg>
<div class="t" style="left:793px;top:455px;font-size:13.500px;font-style:italic;font-weight:bold;font-family:'Liberation Serif',serif;color:#dcdcdc;z-index:5">fx</div>
</body>
</html>
